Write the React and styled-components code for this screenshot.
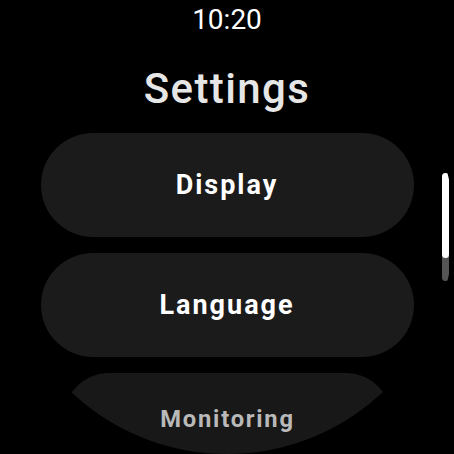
import React from 'react'
import styled, { createGlobalStyle } from 'styled-components'

const GlobalStyle = createGlobalStyle`
  html, body {
    margin: 0;
    padding: 0;
    background: #000;
  }
  body {
    font-family: Roboto, "Noto Sans", sans-serif;
  }
`

const items = [
  { label: 'Display' },
  { label: 'Language' },
  { label: 'Monitoring', faded: true },
]

export default function App() {
  return (
    <>
      <GlobalStyle />
      <Watch>
        <Time>10:20</Time>
        <Title>Settings</Title>
        <List>
          {items.map(item => (
            <Chip key={item.label} faded={item.faded}>
              <Label faded={item.faded}>{item.label}</Label>
            </Chip>
          ))}
        </List>
        <ScrollTrack>
          <ScrollThumb />
        </ScrollTrack>
      </Watch>
    </>
  )
}

const Watch = styled.div`
  position: relative;
  width: 454px;
  height: 454px;
  border-radius: 50%;
  overflow: hidden;
  background: #000;

  display: flex;
  flex-flow: column nowrap;
  align-items: center;
`

const Time = styled.div`
  padding-top: 4px;
  font-size: 28px;
  line-height: 32px;
  color: #fff;
`

const Title = styled.div`
  margin-top: 29px;
  font-size: 42px;
  line-height: 48px;
  font-weight: 500;
  letter-spacing: 1.4px;
  color: #e6e6e6;
`

const List = styled.div`
  margin-top: 20px;
  display: flex;
  flex-flow: column nowrap;
  gap: 16px;
`

const Chip = styled.div.withConfig({ shouldForwardProp: p => p !== 'faded' })`
  width: 373px;
  height: 104px;
  flex-shrink: 0;
  border-radius: 52px;
  background: #1b1b1b;

  display: flex;
  align-items: center;
  justify-content: center;

  ${props =>
    props.faded &&
    `
      transform: scale(0.88);
      transform-origin: top center;
      background: #181818;
  `};
`

const Label = styled.span.withConfig({ shouldForwardProp: p => p !== 'faded' })`
  font-size: 27px;
  font-weight: 700;
  letter-spacing: 2px;
  color: ${props => (props.faded ? '#b9b9b9' : '#fff')};
`

const ScrollTrack = styled.div`
  position: absolute;
  top: 173px;
  left: 442px;
  width: 7px;
  height: 108px;
  border-radius: 4px;
  background: #555;
`

const ScrollThumb = styled.div`
  width: 7px;
  height: 85px;
  border-radius: 4px;
  background: #fff;
`
